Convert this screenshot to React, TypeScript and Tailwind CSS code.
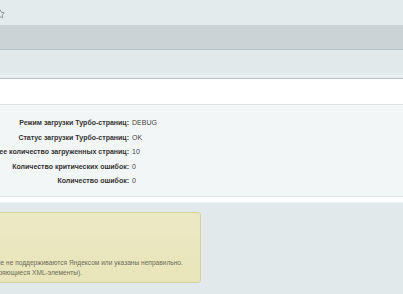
import { Star } from 'lucide-react'

const rows = [
  { label: 'Режим загрузки Турбо-страниц:', value: 'DEBUG' },
  { label: 'Статус загрузки Турбо-страниц:', value: 'OK' },
  { label: 'Общее количество загруженных страниц:', value: '10' },
  { label: 'Количество критических ошибок:', value: '0' },
  { label: 'Количество ошибок:', value: '0' },
]

export default function App() {
  return (
    <div
      className="w-[403px] h-[294px] overflow-hidden bg-[#e2e9eb] text-[#222]"
      style={{ fontFamily: '"Liberation Sans", Arial, sans-serif' }}
    >
      {/* title bar */}
      <div className="h-[25px] bg-[#e4ebed] flex items-center">
        <Star size={10} strokeWidth={2} className="-ml-[5px] mt-[2px] text-[#7d8588]" />
      </div>

      {/* tabs band */}
      <div className="h-[25px] bg-[#cad3d6] border-b border-[#b5c0c4]" />

      {/* toolbar band */}
      <div className="h-[26px] bg-[#e1e9eb] border-b border-[#f0f4f5]" />
      <div className="h-[3px] bg-[#e8eef0] border-b border-[#b9c2c5]" />

      {/* white strip */}
      <div className="h-[26px] bg-white border-b border-[#dde3e5]" />

      {/* info panel */}
      <div className="h-[92px] bg-[#f3f6f7] border-b border-[#e0e6e8] pt-[13px] flex flex-col gap-[4.6px] text-[7px] leading-[10px]">
        {rows.map((r) => (
          <div key={r.label} className="flex">
            <div className="w-[129px] flex justify-end shrink-0">
              <span className="whitespace-nowrap font-bold text-[#333]">{r.label}</span>
            </div>
            <span className="pl-[3px] text-[#444]">{r.value}</span>
          </div>
        ))}
      </div>

      <div className="h-[5px] bg-white" />
      <div className="h-[10px] border-t border-[#eef2f3]" />

      {/* warning box */}
      <div className="-ml-[40px] w-[241px] h-[71px] rounded-[3px] border border-[#d6d2a0] bg-gradient-to-b from-[#ece9c5] to-[#e8e5ba] pt-[45px] pl-[18px] text-[6.6px] leading-[10px] text-[#6e6c58]">
        <div className="whitespace-nowrap">которые не поддерживаются Яндексом или указаны неправильно.</div>
        <div className="whitespace-nowrap">(повторяющиеся XML-элементы).</div>
      </div>
    </div>
  )
}
